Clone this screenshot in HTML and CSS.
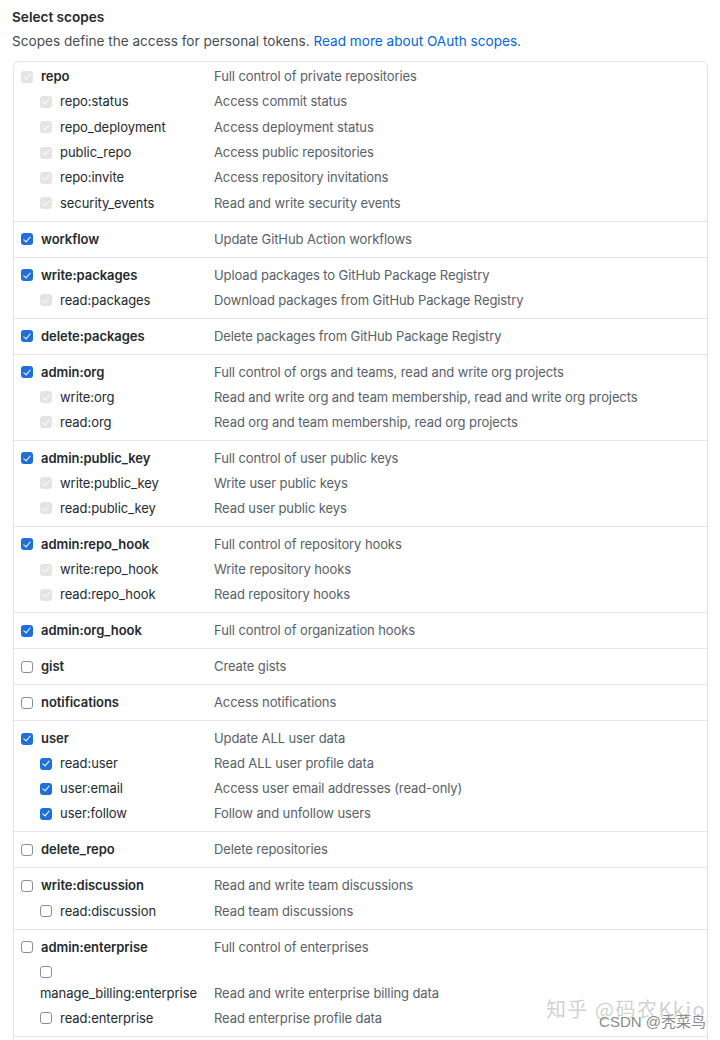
FILE: index.html
```html
<!DOCTYPE html>
<html lang="en">
<head>
<meta charset="utf-8">
<title>Select scopes</title>
<link rel="stylesheet" href="styles.css">
</head>
<body>
<div class="page">
  <h3 class="title">Select scopes</h3>
  <p class="note">Scopes define the access for personal tokens. <a href="#" class="link">Read more about OAuth scopes.</a></p>

  <div class="scopes">
    <div class="group first">
      <div class="row"><label class="lbl"><span class="cb dis"></span>repo</label><span class="desc">Full control of private repositories</span></div>
      <div class="row sub"><label class="lbl"><span class="cb dis"></span>repo:status</label><span class="desc">Access commit status</span></div>
      <div class="row sub"><label class="lbl"><span class="cb dis"></span>repo_deployment</label><span class="desc">Access deployment status</span></div>
      <div class="row sub"><label class="lbl"><span class="cb dis"></span>public_repo</label><span class="desc">Access public repositories</span></div>
      <div class="row sub"><label class="lbl"><span class="cb dis"></span>repo:invite</label><span class="desc">Access repository invitations</span></div>
      <div class="row sub"><label class="lbl"><span class="cb dis"></span>security_events</label><span class="desc">Read and write security events</span></div>
    </div>
    <div class="group">
      <div class="row"><label class="lbl"><span class="cb on"></span>workflow</label><span class="desc">Update GitHub Action workflows</span></div>
    </div>
    <div class="group">
      <div class="row"><label class="lbl"><span class="cb on"></span>write:packages</label><span class="desc">Upload packages to GitHub Package Registry</span></div>
      <div class="row sub"><label class="lbl"><span class="cb dis"></span>read:packages</label><span class="desc">Download packages from GitHub Package Registry</span></div>
    </div>
    <div class="group">
      <div class="row"><label class="lbl"><span class="cb on"></span>delete:packages</label><span class="desc">Delete packages from GitHub Package Registry</span></div>
    </div>
    <div class="group">
      <div class="row"><label class="lbl"><span class="cb on"></span>admin:org</label><span class="desc">Full control of orgs and teams, read and write org projects</span></div>
      <div class="row sub"><label class="lbl"><span class="cb dis"></span>write:org</label><span class="desc">Read and write org and team membership, read and write org projects</span></div>
      <div class="row sub"><label class="lbl"><span class="cb dis"></span>read:org</label><span class="desc">Read org and team membership, read org projects</span></div>
    </div>
    <div class="group">
      <div class="row"><label class="lbl"><span class="cb on"></span>admin:public_key</label><span class="desc">Full control of user public keys</span></div>
      <div class="row sub"><label class="lbl"><span class="cb dis"></span>write:public_key</label><span class="desc">Write user public keys</span></div>
      <div class="row sub"><label class="lbl"><span class="cb dis"></span>read:public_key</label><span class="desc">Read user public keys</span></div>
    </div>
    <div class="group">
      <div class="row"><label class="lbl"><span class="cb on"></span>admin:repo_hook</label><span class="desc">Full control of repository hooks</span></div>
      <div class="row sub"><label class="lbl"><span class="cb dis"></span>write:repo_hook</label><span class="desc">Write repository hooks</span></div>
      <div class="row sub"><label class="lbl"><span class="cb dis"></span>read:repo_hook</label><span class="desc">Read repository hooks</span></div>
    </div>
    <div class="group">
      <div class="row"><label class="lbl"><span class="cb on"></span>admin:org_hook</label><span class="desc">Full control of organization hooks</span></div>
    </div>
    <div class="group">
      <div class="row"><label class="lbl"><span class="cb"></span>gist</label><span class="desc">Create gists</span></div>
    </div>
    <div class="group">
      <div class="row"><label class="lbl"><span class="cb"></span>notifications</label><span class="desc">Access notifications</span></div>
    </div>
    <div class="group">
      <div class="row"><label class="lbl"><span class="cb on"></span>user</label><span class="desc">Update ALL user data</span></div>
      <div class="row sub"><label class="lbl"><span class="cb on"></span>read:user</label><span class="desc">Read ALL user profile data</span></div>
      <div class="row sub"><label class="lbl"><span class="cb on"></span>user:email</label><span class="desc">Access user email addresses (read-only)</span></div>
      <div class="row sub"><label class="lbl"><span class="cb on"></span>user:follow</label><span class="desc">Follow and unfollow users</span></div>
    </div>
    <div class="group">
      <div class="row"><label class="lbl"><span class="cb"></span>delete_repo</label><span class="desc">Delete repositories</span></div>
    </div>
    <div class="group">
      <div class="row"><label class="lbl"><span class="cb"></span>write:discussion</label><span class="desc">Read and write team discussions</span></div>
      <div class="row sub"><label class="lbl"><span class="cb"></span>read:discussion</label><span class="desc">Read team discussions</span></div>
    </div>
    <div class="group">
      <div class="row"><label class="lbl"><span class="cb"></span>admin:enterprise</label><span class="desc">Full control of enterprises</span></div>
      <div class="row sub"><label class="lbl wrap"><span class="cbline"><span class="cb"></span></span>manage_billing:enterprise</label><span class="desc">Read and write enterprise billing data</span></div>
      <div class="row sub"><label class="lbl"><span class="cb"></span>read:enterprise</label><span class="desc">Read enterprise profile data</span></div>
    </div>
    <div class="group tail"></div>
  </div>
</div>
<div class="watermark">
  <span class="wm-zhihu">知乎 @码农Kkio</span>
  <span class="wm-csdn">CSDN @秃菜鸟</span>
</div>
</body>
</html>
```

FILE: styles.css
```css
html, body {
  margin: 0;
  padding: 0;
  background: #ffffff;
}

body {
  font-family: Inter, "Liberation Sans", "Noto Sans CJK SC", sans-serif;
  color: #24292e;
  height: 1040px;
  overflow: hidden;
  position: relative;
}

.page {
  padding: 7px 12px 0 13px;
}

.title {
  margin: 0 0 0 -1px;
  font-size: 13.6px;
  font-weight: 600;
  line-height: 20px;
  color: #24292e;
}

.note {
  margin: 4px 0 0 -1px;
  font-size: 13.6px;
  line-height: 20px;
  color: #444d56;
}

.link {
  color: #0366d6;
  text-decoration: none;
}

.scopes {
  margin-top: 10px;
  border: 1px solid #e1e4e8;
  border-radius: 6px;
}

.group {
  padding: 7px 0;
  border-top: 1px solid #e1e4e8;
}

.group.first {
  border-top: none;
  padding-top: 4px;
  padding-bottom: 6.8px;
}

.group.tail {
  height: 30px;
  padding: 0;
}

.row {
  display: grid;
  grid-template-columns: 200px 1fr;
  align-items: end;
  font-size: 13px;
  line-height: 21px;
  letter-spacing: -0.1px;
}

.row.sub {
  margin-top: 4.1px;
}

.group.first .row.sub {
  margin-top: 4.35px;
}

.lbl {
  display: flex;
  align-items: center;
  padding-left: 7px;
  font-weight: 600;
  color: #24292e;
  letter-spacing: -0.05px;
}

.row.sub .lbl {
  padding-left: 26px;
  font-weight: 400;
}

.lbl.wrap {
  display: block;
}

.cbline {
  display: flex;
  align-items: center;
  height: 21px;
}

.desc {
  color: #586069;
}

.cb {
  flex: none;
  box-sizing: border-box;
  width: 12px;
  height: 12px;
  margin-right: 8px;
  border: 1px solid #8e8e8e;
  border-radius: 3px;
  background: #ffffff;
  position: relative;
}

.cb.on,
.cb.dis {
  border: none;
}

.cb.on {
  background: #1f6fd8;
}

.cb.dis {
  background: #e4e4e4;
}

.cb.on::after,
.cb.dis::after {
  content: "";
  position: absolute;
  left: 4px;
  top: 1.5px;
  width: 3px;
  height: 6px;
  border: solid #ffffff;
  border-width: 0 1.8px 1.8px 0;
  transform: rotate(40deg);
}

.cb.dis::after {
  border-color: #f9f9f9;
}

.watermark {
  position: absolute;
  right: 14px;
  bottom: 8px;
  width: 170px;
  height: 40px;
}

.wm-zhihu {
  position: absolute;
  right: 0;
  top: 2px;
  font-size: 20px;
  color: rgba(170, 170, 170, 0.55);
  white-space: nowrap;
  font-family: "Noto Sans CJK SC", sans-serif;
  letter-spacing: 1.5px;
}

.wm-csdn {
  position: absolute;
  right: 0;
  top: 18px;
  font-size: 15px;
  color: #8a8a8a;
  white-space: nowrap;
  font-family: "Liberation Sans", "Noto Sans CJK SC", sans-serif;
  text-shadow: 0 0 2px #fff, 0 0 1px #fff;
}
```
